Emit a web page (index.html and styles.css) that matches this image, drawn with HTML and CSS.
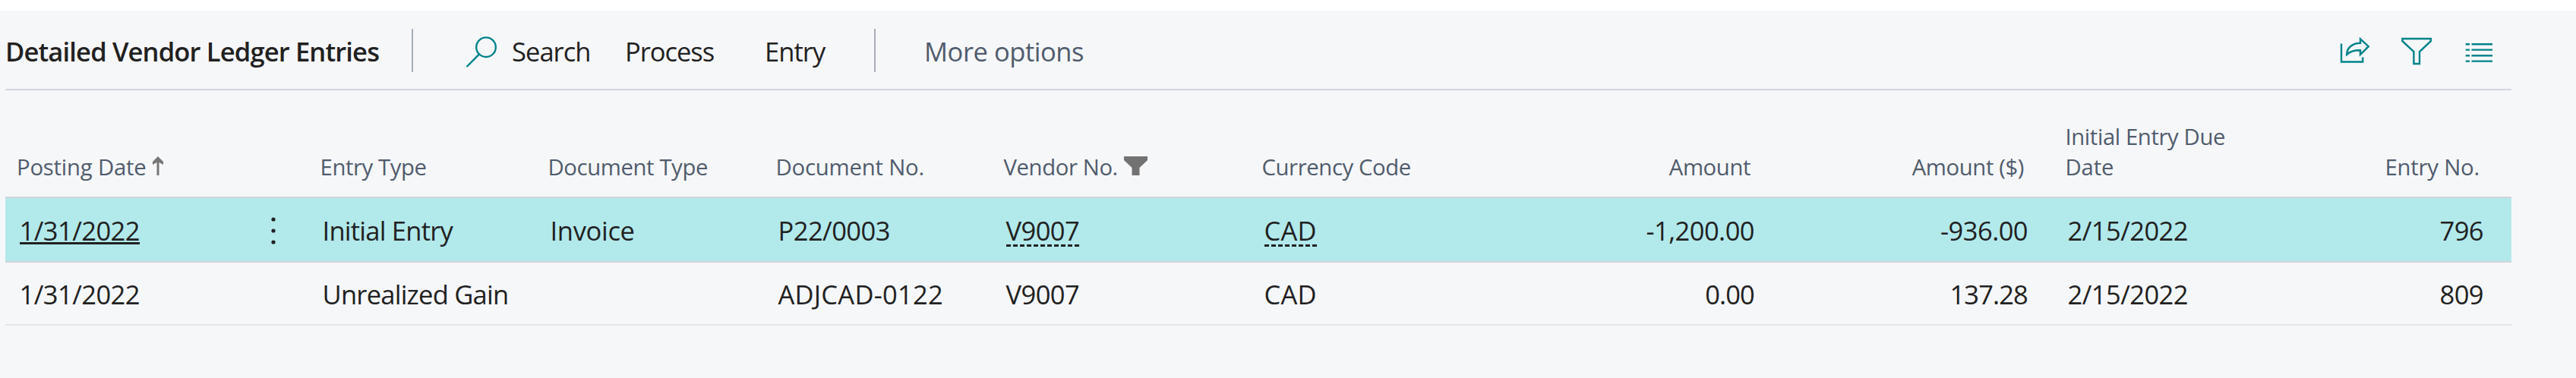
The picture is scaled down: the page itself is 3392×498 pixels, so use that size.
FILE: index.html
```
<!DOCTYPE html>
<html lang="en">
<head>
<meta charset="utf-8">
<title>Detailed Vendor Ledger Entries</title>
<link rel="stylesheet" href="styles.css">
</head>
<body>
<main class="page">
  <header class="toolbar">
    <h1 class="title">Detailed Vendor Ledger Entries</h1>
    <span class="divider"></span>
    <button class="action search">
      <svg class="search-icon" viewBox="0 0 42 42"><circle cx="28" cy="15.200" r="12.800"/><path d="M19 24.300 2.500 41"/></svg>
      <span>Search</span>
    </button>
    <button class="action process">Process</button>
    <button class="action entry">Entry</button>
    <span class="divider"></span>
    <button class="action more">More options</button>
    <div class="tools">
      <svg class="tool share" viewBox="0 0 42 38"><path d="M3 8.500v24h28.200v-6M28 2.300v5.500C17 8 10 14.500 10.200 22.800c4-3.800 10-5.800 17.800-5.600v5.600L38.800 12.200z"/></svg>
      <svg class="tool funnel" viewBox="0 0 42 38"><path d="M3.400 2h37.400v3.200L26 19v16h-7.600V19L3.400 5.200z"/></svg>
      <svg class="tool list" viewBox="0 0 36 28"><path d="M.7 4.200H6M.7 11.600H6M.7 19.200H6M.7 26.600H6M8.500 4.200H36M8.500 11.600H36M8.500 19.200H36M8.500 26.600H36"/></svg>
    </div>
  </header>
  <section class="table">
    <div class="row head">
      <div class="cell posting"><span>Posting Date</span><svg class="sort" viewBox="0 0 14 25"><path d="M7 0l7 7v4l-5.500-3v17h-3V8L0 11V7z"/></svg></div>
      <div class="cell"></div>
      <div class="cell">Entry Type</div>
      <div class="cell">Document Type</div>
      <div class="cell snug">Document No.</div>
      <div class="cell vendor"><span>Vendor No.</span><svg class="filtered" viewBox="0 0 31 25"><path d="M0 0h31v5L20.500 15v10h-10V15L0 5z"/></svg></div>
      <div class="cell">Currency Code</div>
      <div class="cell num">Amount</div>
      <div class="cell num">Amount ($)</div>
      <div class="cell">Initial Entry Due<br><span class="snug">Date</span></div>
      <div class="cell num snug">Entry No.</div>
    </div>
    <div class="row selected">
      <div class="cell date"><a class="link">1/31/2022</a></div>
      <div class="cell menu"><svg class="dots" viewBox="0 0 6 36"><circle cx="3" cy="3" r="2.600"/><circle cx="3" cy="18" r="2.600"/><circle cx="3" cy="33" r="2.600"/></svg></div>
      <div class="cell kind">Initial Entry</div>
      <div class="cell doctype">Invoice</div>
      <div class="cell">P22/0003</div>
      <div class="cell"><a class="lookup">V9007</a></div>
      <div class="cell code"><a class="lookup">CAD</a></div>
      <div class="cell num">-1,200.00</div>
      <div class="cell num">-936.00</div>
      <div class="cell">2/15/2022</div>
      <div class="cell num">796</div>
    </div>
    <div class="row last">
      <div class="cell date">1/31/2022</div>
      <div class="cell"></div>
      <div class="cell kind">Unrealized Gain</div>
      <div class="cell"></div>
      <div class="cell code">ADJCAD-0122</div>
      <div class="cell">V9007</div>
      <div class="cell code">CAD</div>
      <div class="cell num tight">0.00</div>
      <div class="cell num tight">137.28</div>
      <div class="cell">2/15/2022</div>
      <div class="cell num">809</div>
    </div>
  </section>
</main>
</body>
</html>
```
FILE: styles.css
```
* { box-sizing: border-box; }
body {
  margin: 0;
  background: #fff;
  color: #212121;
  font-family: "Open Sans", "Noto Sans", sans-serif;
  font-size: 34.5px;
}
.page {
  margin-top: 14px;
  height: 484px;
  padding: 0 85px 0 7px;
  background: #f6f7f9;
}
.toolbar {
  display: flex;
  align-items: center;
  height: 105px;
  padding-top: 4px;
  border-bottom: 2px solid #d2d5dd;
  line-height: 48px;
}
.title {
  margin: 0;
  width: 535px;
  font-size: 34.5px;
  font-weight: 600;
  letter-spacing: -0.83px;
  white-space: nowrap;
}
.divider { width: 2px; height: 57px; margin-bottom: 2px; background: #a6adba; }
.action {
  display: flex;
  align-items: center;
  padding: 0;
  border: 0;
  background: none;
  color: inherit;
  font: inherit;
  line-height: 48px;
  letter-spacing: -0.95px;
  white-space: nowrap;
}
.search { width: 278px; padding-left: 68px; }
.search-icon { width: 42px; height: 42px; margin-right: 20px; fill: none; stroke: #00838a; stroke-width: 2.4; }
.process { width: 184px; padding-left: 1px; letter-spacing: -1.05px; }
.entry { width: 145px; padding-left: 1px; }
.more { margin-left: 64px; color: #505c6d; letter-spacing: -0.45px; }
.tools { display: flex; align-items: center; margin-left: auto; padding-right: 25px; }
.tool { fill: none; stroke: #00838a; stroke-width: 2.4; }
.share { width: 42px; height: 38px; margin-right: 38px; }
.funnel { width: 42px; height: 38px; margin-right: 44px; }
.list { width: 36px; height: 28px; }
.row {
  display: grid;
  grid-template-columns: 303px 99px 300px 300px 300px 340px 340px 358px 360px 300px 300px;
  border-bottom: 2px solid #d2d5dd;
  line-height: 48px;
  letter-spacing: -0.55px;
}
.cell { padding-left: 15.5px; white-space: nowrap; }
.date { padding-left: 18.5px; }
.kind { letter-spacing: -0.75px; }
.doctype { letter-spacing: -0.32px; }
.code { letter-spacing: 0.25px; }
.tight { letter-spacing: -0.85px; }
.num { padding-left: 0; padding-right: 37px; text-align: right; }
.head {
  height: 142px;
  align-items: end;
  padding-bottom: 19px;
  color: #505c6d;
  font-size: 29.3px;
  line-height: 40px;
  letter-spacing: -0.4px;
}
.head .cell { padding-left: 12.5px; }
.head .posting { padding-left: 15px; letter-spacing: -0.2px; }
.head .num { padding-right: 42px; }
.snug { letter-spacing: -0.2px; }
.selected { height: 85px; padding-top: 19px; background: #b2e9eb; }
.last { height: 83px; padding-top: 18px; border-color: #e3e6ea; }
.sort { width: 14px; height: 25px; margin-left: 8px; fill: #777; }
.filtered { width: 31px; height: 25px; margin-left: 8.5px; fill: #727272; }
.menu { padding-left: 47px; }
.dots { display: block; width: 6px; height: 36px; margin-top: 6px; fill: #212121; }
.link, .lookup { display: inline-block; height: 45px; border-bottom: 3px dashed #212121; }
.link { height: 42px; border-bottom-style: solid; }
```
